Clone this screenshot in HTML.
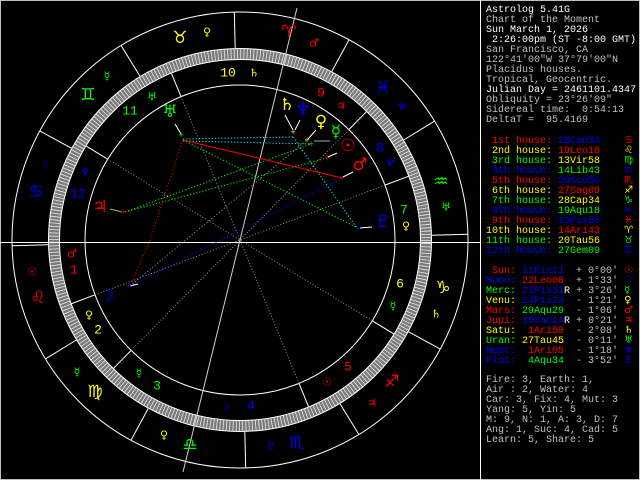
<!DOCTYPE html>
<html><head><meta charset="utf-8"><style>
html,body{margin:0;padding:0;background:#000;}
#w{position:relative;width:640px;height:480px;background:#000;overflow:hidden;}
#p{position:absolute;left:486px;top:6px;font:10px/10px "Liberation Mono",monospace;color:#c0c0c0;}
#p div{height:10px;line-height:10px;white-space:pre;}
.w{color:#fff}.r{color:#f00}.y{color:#ff0}.g{color:#0f0}.b{color:#00f}
.s{font-family:"DejaVu Sans",sans-serif;font-size:10px;}
</style></head><body><div id="w">
<svg width="640" height="480" style="position:absolute;left:0;top:0" font-family="DejaVu Sans, sans-serif">
<rect x="0.5" y="0.5" width="639" height="479" fill="none" stroke="#c0c0c0"/>
<line x1="480.5" y1="0" x2="480.5" y2="480" stroke="#fff"/>
<g transform="translate(240,240)" fill="none">
<circle r="228" stroke="#fff"/>
<circle r="186" stroke="#7a7a7a" stroke-width="11"/>
<circle r="186" stroke="#e8e8e8" stroke-width="11" stroke-dasharray="0.8 2.4463"/>
<circle r="191.5" stroke="#fff"/>
<circle r="180.5" stroke="#fff"/>
<circle r="155" stroke="#fff"/>
<g stroke="#fff">
<line x1="192" x2="228" transform="rotate(-61.43)"/><line x1="192" x2="228" transform="rotate(-91.43)"/>
<line x1="192" x2="228" transform="rotate(-121.43)"/><line x1="192" x2="228" transform="rotate(-151.43)"/>
<line x1="192" x2="228" transform="rotate(-181.43)"/><line x1="192" x2="228" transform="rotate(-211.43)"/>
<line x1="192" x2="228" transform="rotate(-241.43)"/><line x1="192" x2="228" transform="rotate(-271.43)"/>
<line x1="192" x2="228" transform="rotate(-301.43)"/><line x1="192" x2="228" transform="rotate(-331.43)"/>
<line x1="192" x2="228" transform="rotate(-1.43)"/><line x1="192" x2="228" transform="rotate(-31.43)"/>
<line x1="155" x2="180" transform="rotate(-200.7)"/><line x1="155" x2="180" transform="rotate(-225.4)"/>
<line x1="155" x2="180" transform="rotate(-292.36)"/><line x1="155" x2="180" transform="rotate(-328.58)"/>
<line x1="155" x2="180" transform="rotate(-20.73)"/><line x1="155" x2="180" transform="rotate(-45.4)"/>
<line x1="155" x2="180" transform="rotate(-112.36)"/><line x1="155" x2="180" transform="rotate(-148.58)"/>
</g>
<g stroke="#909090" stroke-dasharray="1 2">
<line x1="-155" x2="155" transform="rotate(-20.73)"/><line x1="-155" x2="155" transform="rotate(-45.4)"/>
<line x1="-155" x2="155" transform="rotate(-112.36)"/><line x1="-155" x2="155" transform="rotate(-148.58)"/>
</g>
</g>
<line x1="0" y1="242.5" x2="480" y2="242.5" stroke="#fff"/>
<line x1="297" y1="8" x2="183" y2="472" stroke="#d0d0d0"/>
<g fill="none" stroke-dasharray="1.2 2">
<line x1="183" y1="139" x2="293" y2="137" stroke="#0ff"/>
<line x1="183" y1="141" x2="311" y2="144" stroke="#0ff"/>
<line x1="293" y1="137" x2="357" y2="228" stroke="#0ff"/>
<line x1="183" y1="140" x2="150" y2="240" stroke="#f00"/>
<line x1="150" y1="240" x2="130" y2="286" stroke="#f00"/>
<line x1="125" y1="212" x2="327" y2="158" stroke="#0f0"/>
<line x1="125" y1="212" x2="311" y2="144" stroke="#0f0"/>
<line x1="183" y1="140" x2="358" y2="228" stroke="#0f0"/>
<line x1="130" y1="286" x2="342" y2="178" stroke="#00f"/>
<line x1="130" y1="286" x2="307" y2="140" stroke="#888"/>
</g>
<line x1="183" y1="140" x2="342" y2="178" stroke="#f00"/>
<g stroke="#fff">
<line x1="110" y1="209" x2="122" y2="212" stroke="#aaa"/>
<line x1="175" y1="124" x2="181" y2="134"/>
<line x1="285" y1="115" x2="293" y2="130"/>
<line x1="300" y1="120" x2="295" y2="130"/>
<line x1="316" y1="130" x2="308" y2="139"/>
<line x1="314" y1="141" x2="330" y2="141" stroke="#aaa"/>
<line x1="337" y1="153" x2="328" y2="157"/>
<line x1="353" y1="172" x2="343" y2="177"/>
<line x1="372" y1="227" x2="360" y2="228"/>
<line x1="138" y1="284" x2="130" y2="286"/>
</g>
<g font-size="11" text-anchor="middle" dominant-baseline="central">
<text x="289" y="32" fill="#f00" font-size="17">♈</text>
<text x="180" y="38" fill="#ff0" font-size="17">♉</text>
<text x="88" y="95" fill="#0f0" font-size="17">♊</text>
<text x="36" y="192" fill="#00f" font-size="17">♋</text>
<text x="38" y="298" fill="#f00" font-size="17">♌</text>
<text x="95" y="392" fill="#ff0" font-size="17">♍</text>
<text x="190" y="445" fill="#0f0" font-size="17">♎</text>
<text x="297" y="443" fill="#00f" font-size="17">♏</text>
<text x="392" y="382" fill="#f00" font-size="17">♐</text>
<text x="443" y="288" fill="#ff0" font-size="17">♑</text>
<text x="441" y="182" fill="#0f0" font-size="17">♒</text>
<text x="383" y="88" fill="#00f" font-size="17">♓</text>
<text x="314" y="43" fill="#f00">♂</text><text x="207" y="32" fill="#ff0">♀</text>
<text x="107" y="76" fill="#0f0">☿</text><text x="43" y="164" fill="#00f">☽</text>
<text x="32" y="272" fill="#f00">☉</text><text x="77" y="372" fill="#0f0">☿</text>
<text x="164" y="435" fill="#ff0">♀</text><text x="271" y="446" fill="#00f">♇</text>
<text x="372" y="403" fill="#f00">♃</text><text x="436" y="314" fill="#ff0">♄</text>
<text x="446" y="207" fill="#0f0">♅</text><text x="402" y="107" fill="#00f">♆</text>
<g font-family="Liberation Mono, monospace" font-size="13">
<text x="228" y="73" fill="#ff0">10</text><text x="130" y="111" fill="#0f0">11</text>
<text x="78" y="194" fill="#00f">12</text><text x="74" y="270" fill="#f00">1</text>
<text x="98" y="330" fill="#ff0">2</text><text x="157" y="386" fill="#0f0">3</text>
<text x="251" y="406" fill="#00f">4</text><text x="348" y="367" fill="#f00">5</text>
<text x="400" y="284" fill="#ff0">6</text><text x="404" y="210" fill="#0f0">7</text>
<text x="380" y="148" fill="#00f">8</text><text x="321" y="93" fill="#f00">9</text>
</g>
<text x="254" y="73" fill="#ff0">♄</text><text x="152" y="97" fill="#0f0">♅</text>
<text x="85" y="172" fill="#00f">♆</text><text x="72" y="254" fill="#f00">♂</text>
<text x="89" y="315" fill="#ff0">♀</text><text x="139" y="373" fill="#0f0">☿</text>
<text x="225" y="407" fill="#00f">☽</text><text x="327" y="382" fill="#f00">☉</text>
<text x="393" y="306" fill="#0f0">☿</text><text x="406" y="226" fill="#ff0">♀</text>
<text x="390" y="163" fill="#00f">♆</text><text x="341" y="106" fill="#f00">♃</text>
<g font-size="17">
<text x="100" y="207" fill="#f00">♃</text><text x="170" y="112" fill="#0f0">♅</text>
<text x="287" y="105" fill="#ff0">♄</text><text x="303" y="110" fill="#00f">♆</text>
<text x="321" y="122" fill="#ff0">♀</text><text x="336" y="132" fill="#0f0">☿</text>
<text x="348" y="146" fill="#f00">☉</text><text x="360" y="165" fill="#f00">♂</text>
<text x="383" y="222" fill="#00f">♇</text><text x="107" y="296" fill="#00f">☽</text>
</g>
</g>
<g font-size="7" text-anchor="middle" dominant-baseline="central">
<text x="123" y="212" fill="#f00">+</text><text x="181" y="135" fill="#0f0">+</text>
<text x="293" y="132" fill="#ff0">+</text><text x="307" y="140" fill="#ff0">+</text>
<text x="311" y="144" fill="#0f0">+</text><text x="327" y="158" fill="#f00">+</text>
<text x="342" y="178" fill="#f00">+</text><text x="358" y="228" fill="#00f">+</text>
<text x="129" y="286" fill="#00f">+</text>
</g>
</svg>
<div id="p"><div class="w">Astrolog 5.41G</div><div>Chart of the Moment</div><div class="w">Sun March 1, 2026</div><div class="w"> 2:26:00pm (ST -8:00 GMT)</div><div>San Francisco, CA</div><div>122°41'00"W 37°79'00"N</div><div>Placidus houses.</div><div>Tropical, Geocentric.</div><div class="w">Julian Day = 2461101.4347</div><div>Obliquity = 23°26'09"</div><div>Sidereal time:  0:54:13</div><div>DeltaT =  95.4169</div><div> </div><div><span class="r"> 1st house:</span> <span class="b">28Can34</span>    <span class="r s">♋</span></div><div><span class="y"> 2nd house:</span> <span class="r">19Leo18</span>    <span class="y s">♌</span></div><div><span class="g"> 3rd house:</span> <span class="y">13Vir58</span>    <span class="g s">♍</span></div><div><span class="b"> 4th house:</span> <span class="g">14Lib43</span>    <span class="b s">♎</span></div><div><span class="r"> 5th house:</span> <span class="b">20Sco56</span>    <span class="r s">♏</span></div><div><span class="y"> 6th house:</span> <span class="r">27Sag09</span>    <span class="y s">♐</span></div><div><span class="g"> 7th house:</span> <span class="y">28Cap34</span>    <span class="g s">♑</span></div><div><span class="b"> 8th house:</span> <span class="g">19Aqu18</span>    <span class="b s">♒</span></div><div><span class="r"> 9th house:</span> <span class="b">13Pis58</span>    <span class="r s">♓</span></div><div><span class="y">10th house:</span> <span class="r">14Ari43</span>    <span class="y s">♈</span></div><div><span class="g">11th house:</span> <span class="y">20Tau56</span>    <span class="g s">♉</span></div><div><span class="b">12th house:</span> <span class="g">27Gem09</span>    <span class="b s">♊</span></div><div> </div><div><span class="r"> Sun:</span> <span class="b">11Pis21</span>  + 0°00' <span class="r s">☉</span></div><div><span class="b">Moon:</span> <span class="r">22Leo00</span>  + 1°33' <span class="b s">☽</span></div><div><span class="g">Merc:</span> <span class="b">21Pis31</span><span class="w">R</span> + 3°26' <span class="g s">☿</span></div><div><span class="y">Venu:</span> <span class="b">24Pis23</span>  - 1°21' <span class="y s">♀</span></div><div><span class="r">Mars:</span> <span class="g">29Aqu29</span>  - 1°06' <span class="r s">♂</span></div><div><span class="r">Jupi:</span> <span class="b">15Can14</span><span class="w">R</span> + 0°21' <span class="r s">♃</span></div><div><span class="y">Satu:</span> <span class="r"> 1Ari50</span>  - 2°08' <span class="y s">♄</span></div><div><span class="g">Uran:</span> <span class="y">27Tau45</span>  - 0°11' <span class="g s">♅</span></div><div><span class="b">Nept:</span> <span class="r"> 1Ari05</span>  - 1°18' <span class="b s">♆</span></div><div><span class="b">Plut:</span> <span class="g"> 4Aqu34</span>  - 3°52' <span class="b s">♇</span></div><div> </div><div>Fire: 3, Earth: 1,</div><div>Air : 2, Water: 4</div><div>Car: 3, Fix: 4, Mut: 3</div><div>Yang: 5, Yin: 5</div><div>M: 9, N: 1, A: 3, D: 7</div><div>Ang: 1, Suc: 4, Cad: 5</div><div>Learn: 5, Share: 5</div></div>
</div></body></html>
